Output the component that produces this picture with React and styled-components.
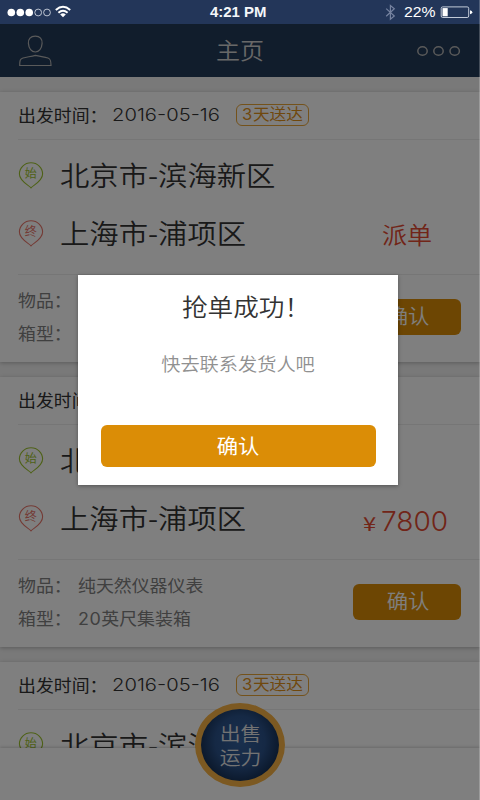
import React from "react";
import styled, { createGlobalStyle } from "styled-components";

const Global = createGlobalStyle`
  * { box-sizing: border-box; }
  body { margin: 0; background: #f2f2f2; font-family: "Noto Sans CJK SC", sans-serif; font-weight: 350; }
`;

const Screen = styled.div`
  position: relative;
  width: 480px;
  height: 800px;
  overflow: hidden;
  display: flex;
  flex-direction: column;
  background: #f2f2f2;
`;
const StatusBar = styled.div`
  height: 24px;
  flex: none;
  background: #233659;
  svg { display: block; }
`;
const NavBar = styled.header`
  height: 53px;
  flex: none;
  display: flex;
  align-items: center;
  justify-content: space-between;
  padding: 0 19px;
  background: #223a58;
`;
const Label = styled.span`
  display: inline-block;
  flex: none;
  white-space: nowrap;
  line-height: 1;
  margin: 0;
  font-size: ${(p) => p.$size}px;
  font-weight: ${(p) => p.$weight || 400};
  color: ${(p) => p.$color || "#333"};
  transform: scaleX(${(p) => p.$stretch || 1.067});
  transform-origin: ${(p) => p.$origin || "left"} center;
`;
const Digits = styled(Label)`
  font-family: Inter, sans-serif;
  font-weight: 350;
`;
const Numeral = styled.span`
  font-family: Inter, sans-serif;
  letter-spacing: 0.5px;
`;
const Place = styled(Label)`
  padding-bottom: 1px;
`;
const NavTitle = styled(Label)`
  padding-left: 12px;
  padding-bottom: 2px;
`;
const Feed = styled.main`
  flex: 1;
  min-height: 0;
  overflow: hidden;
  padding-top: 15px;
  display: flex;
  flex-direction: column;
  gap: 15px;
`;
const Card = styled.article`
  height: 270px;
  flex: none;
  background: #fff;
  box-shadow: 0 1px 4px rgba(0, 0, 0, 0.25);
  padding-left: 18px;
`;
const CardHead = styled.div`
  height: 48px;
  display: grid;
  grid-template-columns: 94px 124px 73px;
  align-items: center;
  padding-bottom: 1px;
  border-bottom: 1px solid #ececec;
`;
const Badge = styled.span`
  height: 22px;
  margin-top: -1px;
  display: flex;
  align-items: center;
  justify-content: center;
  border: 1px solid #e9a436;
  border-radius: 6px;
`;
const Route = styled.div`
  height: 135px;
  padding-top: 6px;
  border-bottom: 1px solid #ececec;
`;
const Stop = styled.div`
  height: 58px;
  display: grid;
  grid-template-columns: 42px 301px 1fr;
  align-items: center;
`;
const Price = styled.div`
  display: flex;
  align-items: baseline;
  gap: ${(p) => (p.$text ? 0 : 7)}px;
  padding-top: ${(p) => (p.$text ? 3 : 6)}px;
  margin-left: ${(p) => (p.$text ? 21 : 2)}px;
`;
const CardFoot = styled.div`
  height: 87px;
  display: flex;
  justify-content: space-between;
  padding: 9px 19px 0 0;
`;
const Facts = styled.div`
  display: grid;
  grid-template-columns: 60px auto;
  grid-auto-rows: 33px;
  align-items: center;
`;
const Button = styled.button`
  width: ${(p) => p.$width}px;
  height: ${(p) => p.$height}px;
  margin-top: ${(p) => p.$top}px;
  display: flex;
  align-items: center;
  justify-content: center;
  border: 0;
  padding: 0 0 2px 2px;
  border-radius: 6px;
  background: #db8d06;
  font: inherit;
`;
const DialogButton = styled(Button)`
  padding: 0;
`;
const PinIcon = styled.svg`
  display: block;
  width: 26px;
  height: 27px;
`;
const TabBar = styled.footer`
  position: absolute;
  left: 0;
  right: 0;
  bottom: 0;
  height: 52px;
  background: #fff;
  box-shadow: 0 -1px 3px rgba(0, 0, 0, 0.18);
`;
const Sell = styled.button`
  position: absolute;
  left: 195px;
  bottom: 13px;
  width: 90px;
  height: 84px;
  display: flex;
  flex-direction: column;
  align-items: center;
  justify-content: center;
  gap: 4px;
  padding: 0 0 1px 1px;
  border: 6px solid #f8b344;
  border-radius: 50%;
  background: radial-gradient(ellipse at 50% 45%, #33609c 0%, #2b528a 45%, #173258 72%);
  font: inherit;
`;
const Scrim = styled.div`
  position: absolute;
  inset: 24px 0 0 0;
  background: rgba(0, 0, 0, 0.5);
`;
const EdgeLine = styled.div`
  position: absolute;
  inset: 0 0 0 auto;
  width: 1px;
  background: rgba(255, 255, 255, 0.22);
`;
const Dialog = styled.section`
  position: absolute;
  left: 78px;
  top: 275px;
  width: 320px;
  height: 210px;
  display: flex;
  flex-direction: column;
  align-items: center;
  padding-top: 19px;
  background: #fff;
  box-shadow: 0 1px 4px rgba(0, 0, 0, 0.35);
`;
const DialogTitle = styled(Label)`
  margin-left: 16px;
`;
const Message = styled.div`
  display: flex;
  margin-top: 36px;
`;

function Pin({ color, char }) {
  return (
    <PinIcon viewBox="0 0 26 27">
      <path
        d="M13 25.8 C10.5 22.9 1.4 19.2 1.4 12 A11.6 11.2 0 0 1 24.6 12 C24.6 19.2 15.5 22.9 13 25.8 Z"
        fill="none" stroke={color} strokeWidth="1.1"
      />
      <text x="12.8" y="16" textAnchor="middle" fontSize="12" fontWeight="400" fill={color}>{char}</text>
    </PinIcon>
  );
}

function Status() {
  return (
    <StatusBar>
      <svg width="480" height="24" fontFamily="Liberation Sans, Arial, sans-serif">
        <g fill="#fff">
          <circle cx="11.3" cy="12.5" r="3.8" />
          <circle cx="20.3" cy="12.5" r="3.8" />
          <circle cx="29.2" cy="12.5" r="3.8" />
        </g>
        <g fill="none" stroke="#dfe4ed" strokeWidth="0.8">
          <circle cx="38.2" cy="12.5" r="3.4" />
          <circle cx="47" cy="12.5" r="3.4" />
        </g>
        <g fill="none" stroke="#fff" strokeWidth="2">
          <path d="M55.8 9.9 Q63 3.7 70.2 9.9" />
          <path d="M58.4 12.7 Q63 8.7 67.6 12.7" />
        </g>
        <path d="M60.2 14.5 Q63 12.2 65.8 14.5 L63 17.2 Z" fill="#fff" />
        <text x="210" y="17.4" fontSize="14" fontWeight="bold" fill="#f4f6fa" textLength="56.5" lengthAdjust="spacingAndGlyphs">4:21 PM</text>
        <path d="M386.2 8.6 L394.3 16 L390.4 19.2 V5.6 L394.3 8.8 L386.2 16.2" fill="none" stroke="#7683a0" strokeWidth="1.2" />
        <text x="404" y="17.4" fontSize="14.2" fontWeight="400" fill="#fff" textLength="31.5" lengthAdjust="spacingAndGlyphs">22%</text>
        <rect x="441.2" y="6.9" width="27.5" height="10.6" rx="1.5" fill="none" stroke="#d5dbe6" strokeWidth="0.9" />
        <rect x="442.5" y="8.1" width="5.2" height="8.2" fill="#fff" />
        <path d="M470 10.3 Q472.3 10.7 472.3 12.3 Q472.3 13.9 470 14.3 Z" fill="#fff" />
      </svg>
    </StatusBar>
  );
}

function Order({ price, preview }) {
  return (
    <Card>
      <CardHead>
        <Label $size={16.8}>出发时间：</Label>
        <Digits $size={17.8} $stretch={1.137}>2016-05-16</Digits>
        <Badge><Label $size={15.6} $color="#e0901a" $origin="center"><Numeral>3</Numeral>天送达</Label></Badge>
      </CardHead>
      <Route>
        <Stop>
          <Pin color="#9dc32f" char="始" />
          <Place $size={27.5} $weight={350}>北京市-滨海新区</Place>
        </Stop>
        {!preview && (
          <Stop>
            <Pin color="#e8766a" char="终" />
            <Place $size={27.5} $weight={350}>上海市-浦项区</Place>
            {price ? (
              <Price>
                <Label $size={19} $stretch={1.25} $color="#e34a32">¥</Label>
                <Digits $size={27} $color="#e34a32" $stretch={1.04}>{price}</Digits>
              </Price>
            ) : (
              <Price $text><Label $size={23.5} $weight={350} $color="#e34a32">派单</Label></Price>
            )}
          </Stop>
        )}
      </Route>
      {!preview && (
        <CardFoot>
          <Facts>
            <Label $size={16.8} $color="#808080">物品：</Label>
            <Label $size={16.8} $color="#808080">纯天然仪器仪表</Label>
            <Label $size={16.8} $color="#808080">箱型：</Label>
            <Label $size={16.8} $color="#808080"><Numeral>20</Numeral>英尺集装箱</Label>
          </Facts>
          <Button $width={108} $height={36} $top={15}>
            <Label $size={20} $weight={350} $color="#fff" $origin="center">确认</Label>
          </Button>
        </CardFoot>
      )}
    </Card>
  );
}

export default function App() {
  return (
    <Screen>
      <Global />
      <Status />
      <NavBar>
        <svg width="33" height="32" viewBox="0 0 33 32" fill="none" stroke="#b4b4b4" strokeWidth="1.2">
          <path d="M16.3 1.2 C21 1.2 23.4 4 23.1 8.4 C22.8 13.5 20 17 16.3 17 C12.6 17 9.7 13.5 9.4 8.4 C9.1 4 11.5 1.2 16.3 1.2 Z" />
          <path d="M.7 30.5 C.7 25.5 1 23.8 4 23 C8 22 12 21.5 16.3 20.4 C21 21.5 25 22 29 23 C31.5 23.8 32 25.5 32 30.5 Z" />
        </svg>
        <NavTitle as="h1" $size={22.5} $weight={350} $color="#d0d0d0" $origin="center">主页</NavTitle>
        <svg width="45" height="12" viewBox="0 0 45 12" fill="none" stroke="#b4b4b4" strokeWidth="1.5">
          <ellipse cx="6.5" cy="6" rx="4.7" ry="4.3" />
          <ellipse cx="22.5" cy="6" rx="4.7" ry="4.3" />
          <ellipse cx="38.7" cy="6" rx="4.7" ry="4.3" />
        </svg>
      </NavBar>
      <Feed>
        <Order />
        <Order price="7800" />
        <Order preview />
      </Feed>
      <TabBar>
        <Sell>
          <Label $size={19.5} $weight={350} $color="#e6e6e6" $origin="center">出售</Label>
          <Label $size={19.5} $weight={350} $color="#e6e6e6" $origin="center">运力</Label>
        </Sell>
      </TabBar>
      <Scrim />
      <Dialog>
        <DialogTitle $size={24} $weight={350} $origin="center">抢单成功！</DialogTitle>
        <Message><Label $size={18} $weight={350} $color="#909090" $origin="center">快去联系发货人吧</Label></Message>
        <DialogButton $width={275} $height={42} $top={53}>
          <Label $size={20} $color="#fff" $origin="center">确认</Label>
        </DialogButton>
      </Dialog>
      <EdgeLine />
    </Screen>
  );
}
